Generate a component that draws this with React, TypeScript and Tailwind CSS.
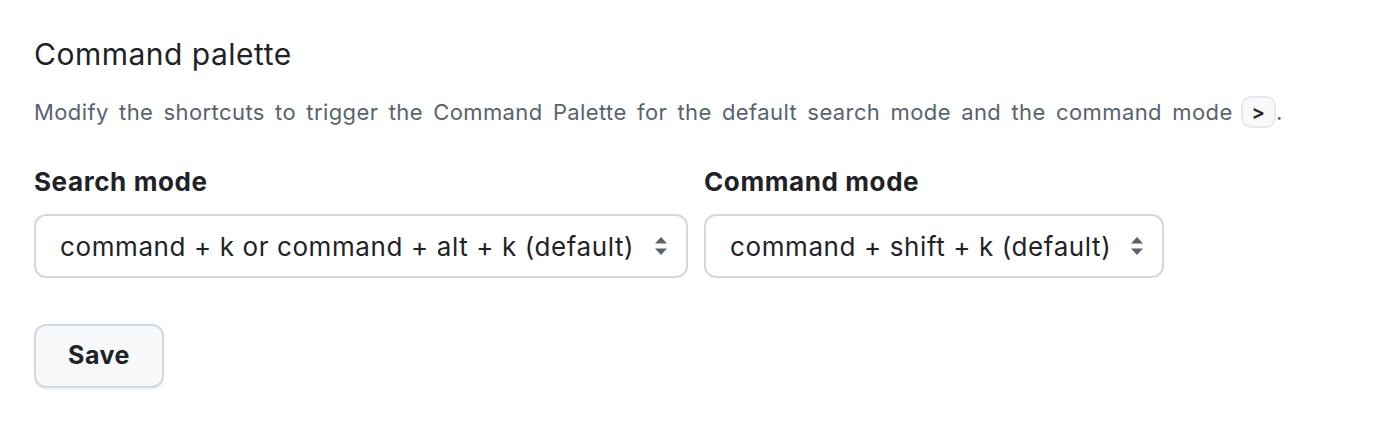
import React from "react";

function Arrows() {
  return (
    <svg width="14" height="22" viewBox="0 0 14 22" className="shrink-0">
      <path d="M7 2 L13 8.5 L1 8.5 Z" fill="#59636e" />
      <path d="M7 20 L13 13.5 L1 13.5 Z" fill="#59636e" />
    </svg>
  );
}

function Select({ value, width }: { value: string; width: string }) {
  return (
    <div
      className={`flex h-[64px] items-center justify-between rounded-[12px] border-2 border-[#d1d9e0] bg-white pl-[24px] pr-[18px] ${width}`}
    >
      <span className="text-[26px] tracking-[0.6px] text-[#1f2328]">{value}</span>
      <Arrows />
    </div>
  );
}

export default function App() {
  return (
    <div
      className="min-h-[426px] bg-white px-[34px] pt-[34px] text-[#1f2328]"
      style={{ fontFamily: "Inter, 'Noto Sans', sans-serif" }}
    >
      <h2 className="text-[30px] leading-[40px] font-normal tracking-[0.5px]">Command palette</h2>
      <p className="mt-[22px] flex items-center text-[22px] leading-[30px] tracking-[0.4px] [word-spacing:3.7px] text-[#59636e]">
        Modify the shortcuts to trigger the Command Palette for the default search mode and the command mode
        <span className="ml-[8px] inline-flex h-[32px] items-center rounded-[10px] border-2 border-[#e5e9ed] bg-[#f6f8fa] px-[9px] text-[20px] font-semibold tracking-normal text-[#1f2328]">
          &gt;
        </span>
        <span className="tracking-normal">.</span>
      </p>
      <div className="mt-[36px] flex gap-[16px]">
        <div className="flex flex-col">
          <label className="text-[26px] font-bold leading-[36px] tracking-[0.6px]">Search mode</label>
          <div className="mt-[14px]">
            <Select value="command + k or command + alt + k (default)" width="w-[654px]" />
          </div>
        </div>
        <div className="flex flex-col">
          <label className="text-[26px] font-bold leading-[36px] tracking-[0.6px]">Command mode</label>
          <div className="mt-[14px]">
            <Select value="command + shift + k (default)" width="w-[460px]" />
          </div>
        </div>
      </div>
      <button className="mt-[46px] h-[64px] w-[130px] rounded-[12px] border-2 border-[#d1d9e0] bg-[#f6f8fa] text-[25px] font-bold tracking-[0.5px] text-[#1f2328] shadow-[0_2px_0_rgba(31,35,40,0.04)]">
        Save
      </button>
    </div>
  );
}
